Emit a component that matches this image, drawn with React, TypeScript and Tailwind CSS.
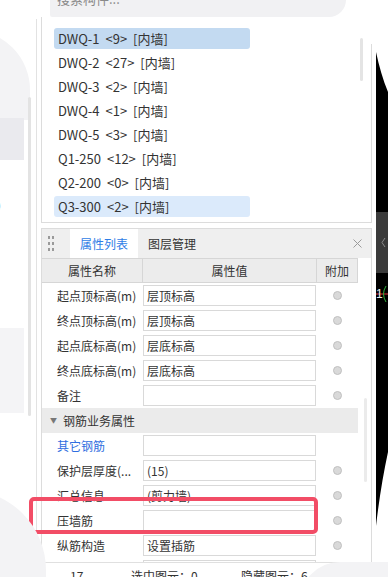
import React from "react";

type Item = { name: string; count: number; tone?: "selected" | "hover" };

const ITEMS: Item[] = [
  { name: "DWQ-1", count: 9, tone: "selected" },
  { name: "DWQ-2", count: 27 },
  { name: "DWQ-3", count: 2 },
  { name: "DWQ-4", count: 1 },
  { name: "DWQ-5", count: 3 },
  { name: "Q1-250", count: 12 },
  { name: "Q2-200", count: 0 },
  { name: "Q3-300", count: 2, tone: "hover" },
];

type Row =
  | { kind: "group"; label: string }
  | { kind: "prop"; label: string; value: string; extra: boolean; link?: boolean };

const ROWS: Row[] = [
  { kind: "prop", label: "起点顶标高(m)", value: "层顶标高", extra: true },
  { kind: "prop", label: "终点顶标高(m)", value: "层顶标高", extra: true },
  { kind: "prop", label: "起点底标高(m)", value: "层底标高", extra: true },
  { kind: "prop", label: "终点底标高(m)", value: "层底标高", extra: true },
  { kind: "prop", label: "备注", value: "", extra: true },
  { kind: "group", label: "钢筋业务属性" },
  { kind: "prop", label: "其它钢筋", value: "", extra: false, link: true },
  { kind: "prop", label: "保护层厚度(...", value: "(15)", extra: true },
  { kind: "prop", label: "汇总信息", value: "(剪力墙)", extra: true },
  { kind: "prop", label: "压墙筋", value: "", extra: true },
  { kind: "prop", label: "纵筋构造", value: "设置插筋", extra: true },
  { kind: "prop", label: "", value: "", extra: true },
];

function Radio() {
  return (
    <span className="block w-[9px] h-[9px] rounded-full border border-[#c0c0c0] bg-[#d9d9d9]" />
  );
}

function PropRow({ row }: { row: Row }) {
  if (row.kind === "group") {
    return (
      <div className="flex items-center h-[25px] w-[316px] bg-[#ebebeb] pl-[8px]">
        <span className="text-[7px] text-[#777] mr-[6px] leading-none">▼</span>
        <span className="text-[#333]">{row.label}</span>
      </div>
    );
  }
  return (
    <div className="grid grid-cols-[101px_174px_41px] h-[25px] items-center">
      <span className={`pl-[15px] whitespace-nowrap ${row.link ? "text-[#2f6ee0]" : "text-[#333]"}`}>
        {row.label}
      </span>
      <div className="h-[21px] w-[173px] border border-[#d9d9d9] bg-white pl-[3px] leading-[19px] text-[#333]">
        {row.value}
      </div>
      <div className="flex justify-center">{row.extra && <Radio />}</div>
    </div>
  );
}

export default function App() {
  return (
    <div className="relative w-[388px] h-[577px] overflow-hidden bg-white font-['Noto_Sans_CJK_SC','Noto_Sans',sans-serif] text-[12px]">
      {/* background blobs behind the page */}
      <div className="absolute left-[-40px] top-[30px] w-[70px] h-[90px] rounded-tr-[60px] bg-[#f3f3f5]" />
      <div className="absolute left-0 top-[118px] w-[24px] h-[42px] bg-[#eaeaee]" />
      <div className="absolute left-0 top-[328px] w-[24px] h-[85px] bg-[#f4f4f6]" />
      <span className="absolute left-[-3px] top-[196px] text-[12px] text-[#555]">)</span>

      <div className="relative flex flex-col h-full">
        {/* search strip */}
        <div className="h-[17px] pl-[50px]">
          <div className="relative h-[17px] w-[296px] bg-[#f1f1f3] rounded-bl-[8px] rounded-br-[60px] overflow-hidden">
            <span className="absolute left-[7px] top-[-11px] text-[13px] text-[#8a8a8a]">搜索构件...</span>
          </div>
        </div>

        <div className="flex flex-1 min-h-0">
          {/* left strip */}
          <div className="relative w-[41px] shrink-0">
            <div className="absolute left-[28px] top-[80px] w-[3px] h-[319px] rounded-full bg-[#e3e3e3]" />
            <div className="absolute left-[36px] top-[2px] bottom-[0px] w-px bg-[#e2e2e2]" />
          </div>

          {/* main column */}
          <div className="w-[331px] shrink-0 flex flex-col bg-white">
            <div className="relative h-[206px] border-l border-b border-[#dcdcdc] pt-[11px] pl-[12px]">
              {ITEMS.map((it) => (
                <div
                  key={it.name}
                  className={`h-[21px] mb-[3px] w-[196px] rounded-[3px] pl-[4px] leading-[21px] text-[13px] text-[#333] whitespace-nowrap [word-spacing:3px] ${
                    it.tone === "selected" ? "bg-[#c3daf1]" : it.tone === "hover" ? "bg-[#dbeafb]" : ""
                  }`}
                >
                  {it.name} &lt;{it.count}&gt; [内墙]
                </div>
              ))}
              <div className="absolute right-[9px] top-[21px] w-[3px] h-[43px] rounded-full bg-[#e4e4e4]" />
              <div className="absolute right-0 top-[27px] bottom-0 w-px bg-[#dcdcdc]" />
            </div>

            <div className="h-[5px]" />

            <div className="relative h-[334px] border-x border-t border-[#dcdcdc] overflow-hidden">
              {/* tab bar */}
              <div className="flex items-center h-[29px] bg-[#efefef]">
                <div className="grid grid-cols-2 gap-x-[2px] gap-y-[3px] ml-[6px] mr-[16px]">
                  {[0, 1, 2, 3, 4, 5].map((i) => (
                    <span key={i} className="w-[2px] h-[3px] bg-[#9a9a9a]" />
                  ))}
                </div>
                <div className="h-[29px] w-[68px] bg-white flex items-center justify-center text-[#2f7de6]">
                  属性列表
                </div>
                <div className="pl-[10px] text-[#333]">图层管理</div>
                <svg className="ml-auto mr-[9px]" width="9" height="9" viewBox="0 0 9 9">
                  <path d="M0.5 0.5L8.5 8.5M8.5 0.5L0.5 8.5" stroke="#9a9a9a" strokeWidth="1" />
                </svg>
              </div>

              {/* table header */}
              <div className="grid grid-cols-[101px_174px_41px] w-[316px] h-[25px] bg-[#ececec] border-y border-[#d6d6d6] text-[#333]">
                <div className="flex items-center justify-center border-r border-[#d6d6d6]">属性名称</div>
                <div className="flex items-center justify-center border-r border-[#d6d6d6]">属性值</div>
                <div className="flex items-center justify-center border-r border-[#d6d6d6]">附加</div>
              </div>

              {ROWS.map((r, i) => (
                <PropRow key={i} row={r} />
              ))}

              <div className="absolute right-[4px] top-[169px] w-[3px] h-[84px] rounded-full bg-[#ebebeb]" />
            </div>

            {/* status bar */}
            <div className="h-[15px] border-t border-[#e0e0e0] relative text-[12px] text-[#333]">
              <span className="absolute left-[29px] top-[4px]">17</span>
              <span className="absolute left-[90px] top-[4px]">选中图元：0</span>
              <span className="absolute left-[200px] top-[4px]">隐藏图元：6</span>
            </div>
          </div>

          <div className="flex-1" />
        </div>
      </div>

      {/* red highlight */}
      <div className="absolute left-[29px] top-[497px] w-[289px] h-[37px] rounded-[5px] border-[4px] border-[#f24d66]" />

      {/* bottom blobs over the page */}
      <div className="absolute left-[-40px] top-[490px] w-[86px] h-[100px] rounded-tr-[80px] bg-[#f3f3f5]" />
      <div className="absolute left-[300px] top-[562px] w-[120px] h-[40px] rounded-tl-[50px] bg-[#f3f3f5]" />

      {/* dark frame on the right */}
      <svg className="absolute left-[376px] top-0" width="12" height="577" viewBox="0 0 12 577">
        <path d="M0 52 C3 66 7 80 12 92 L12 452 C7 475 3 500 0 526 Z" fill="#000" />
        <rect x="0" y="212" width="12" height="61" fill="#3b3b3b" />
        <path d="M9 238 L6 242.5 L9 247" stroke="#8a8a8a" strokeWidth="1" fill="none" />
        <line x1="0" y1="294" x2="12" y2="294" stroke="#e23b3b" strokeWidth="1" />
        <path d="M10 286 Q5 294 10 302" stroke="#2fae3a" strokeWidth="1" fill="none" />
        <text x="0" y="298" fontSize="12" fill="#eee" fontFamily="Liberation Sans">1</text>
      </svg>
    </div>
  );
}
